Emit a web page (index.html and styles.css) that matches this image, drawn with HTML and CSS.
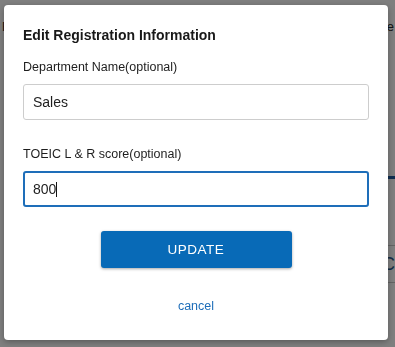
FILE: index.html
```html
<!DOCTYPE html>
<html lang="en">
<head>
    <meta charset="UTF-8">
    <meta name="viewport" content="width=device-width, initial-scale=1.0">
    <title>Edit Registration Information</title>
    <link rel="stylesheet" href="styles.css">
</head>
<body>
    <div class="page">
        <div class="page-head">
            <span class="page-title">F</span>
            <span class="page-mode">Mode</span>
        </div>
        <div class="page-tab"></div>
        <div class="page-row">C</div>
    </div>

    <div class="overlay">
        <div class="modal">
            <h2>Edit Registration Information</h2>
            <div class="field">
                <label for="dept">Department Name(optional)</label>
                <div class="input">Sales</div>
            </div>
            <div class="field">
                <label for="toeic">TOEIC L &amp; R score(optional)</label>
                <div class="input input-focus">800<span class="caret"></span></div>
            </div>
            <button class="btn">UPDATE</button>
            <a class="cancel" href="#">cancel</a>
        </div>
    </div>
</body>
</html>
```

FILE: styles.css
```css
body {
    font-family: "Liberation Sans", Arial, sans-serif;
    margin: 0;
    padding: 0;
    background-color: white;
    color: rgb(33, 33, 33);
    width: 395px;
    height: 347px;
    overflow: hidden;
}
.page {
    height: 347px;
    background: white;
}
.page-head {
    display: flex;
    justify-content: space-between;
    padding: 19px 1px 0 2px;
    font-size: 13px;
    color: rgb(40, 40, 40);
}
.page-tab {
    margin: 142px 0 0 auto;
    width: 60px;
    height: 3px;
    background: rgb(30, 90, 160);
}
.page-row {
    margin: 66px 0 0 300px;
    height: 36px;
    padding-left: 82px;
    font-size: 18px;
    line-height: 36px;
    color: rgb(40, 90, 140);
    border-top: 1px solid rgb(200, 200, 200);
    border-bottom: 1px solid rgb(200, 200, 200);
}
.overlay {
    position: fixed;
    top: 0;
    left: 0;
    right: 0;
    bottom: 0;
    background: rgba(0, 0, 0, 0.5);
}
.modal {
    margin: 5px 0 0 4px;
    width: 384px;
    height: 335px;
    box-sizing: border-box;
    padding: 21px 19px 0 19px;
    background: white;
    border-radius: 4px;
    box-shadow: 0 2px 6px rgba(0, 0, 0, 0.3);
    display: flex;
    flex-direction: column;
}
.modal h2 {
    margin: 0 0 16px 0;
    font-size: 14px;
    line-height: 18px;
    font-weight: bold;
    color: rgb(25, 25, 25);
}
.field {
    margin-bottom: 27px;
}
.field label {
    display: block;
    font-size: 12.5px;
    line-height: 15px;
    color: rgb(30, 30, 30);
    margin-bottom: 9px;
}
.input {
    height: 36px;
    width: 346px;
    box-sizing: border-box;
    border: 1px solid rgb(205, 205, 205);
    border-radius: 3px;
    padding: 0 0 0 9px;
    font-size: 14px;
    line-height: 34px;
    color: rgb(30, 30, 30);
}
.input-focus {
    border: 2px solid rgb(30, 110, 185);
    padding-left: 8px;
    line-height: 32px;
}
.caret {
    display: inline-block;
    width: 1px;
    height: 15px;
    background: rgb(20, 20, 20);
    vertical-align: -3px;
}
.btn {
    align-self: center;
    margin-top: -3px;
    width: 191px;
    height: 37px;
    background-color: rgb(8, 106, 183);
    color: white;
    border: none;
    border-radius: 3px;
    font-family: "Liberation Sans", Arial, sans-serif;
    font-size: 13.5px;
    letter-spacing: 0.5px;
    box-shadow: 0 1px 3px rgba(0, 0, 0, 0.35);
    cursor: pointer;
}
.cancel {
    align-self: center;
    margin-top: 31px;
    font-size: 12.5px;
    color: rgb(30, 110, 185);
    text-decoration: none;
}
```
